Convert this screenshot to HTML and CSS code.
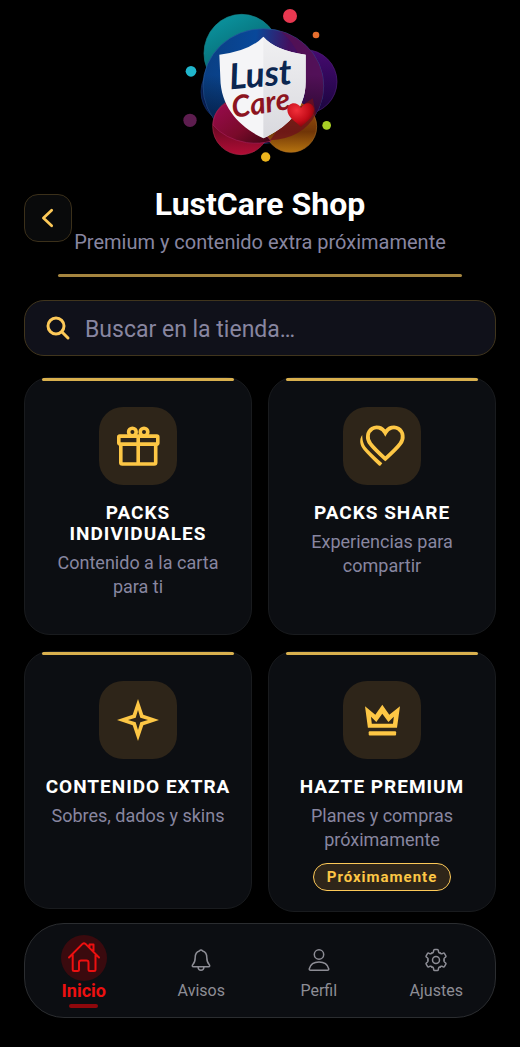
FILE: index.html
```html
<!DOCTYPE html>
<html lang="es">
<head>
    <meta charset="UTF-8">
    <meta name="viewport" content="width=device-width, initial-scale=1.0">
    <title>LustCare Shop</title>
    <link rel="stylesheet" href="styles.css">
</head>
<body>
    <div class="logo">
        <svg viewBox="0 0 540 525" role="img" aria-label="Lust Care">
            <defs>
                <linearGradient id="teal" x1="0" y1="0" x2="0.5" y2="1">
                    <stop offset="0" stop-color="#0b9ba6"/>
                    <stop offset="0.5" stop-color="#087680"/>
                    <stop offset="1" stop-color="#023038"/>
                </linearGradient>
                <linearGradient id="main" x1="0" y1="0.4" x2="1" y2="0.5">
                    <stop offset="0" stop-color="#0a3f83"/>
                    <stop offset="0.4" stop-color="#08489a"/>
                    <stop offset="0.68" stop-color="#43105f"/>
                    <stop offset="1" stop-color="#4c1070"/>
                </linearGradient>
                <linearGradient id="shade" x1="0" y1="0" x2="0" y2="1">
                    <stop offset="0.4" stop-color="#000" stop-opacity="0"/>
                    <stop offset="1" stop-color="#04021a" stop-opacity="0.8"/>
                </linearGradient>
                <linearGradient id="violet" x1="0" y1="0" x2="0" y2="1">
                    <stop offset="0" stop-color="#460a70"/>
                    <stop offset="1" stop-color="#19053d"/>
                </linearGradient>
                <linearGradient id="pink" x1="0" y1="0" x2="1" y2="1">
                    <stop offset="0" stop-color="#9c0b52"/>
                    <stop offset="0.6" stop-color="#7a0a2a"/>
                    <stop offset="1" stop-color="#3c0513"/>
                </linearGradient>
                <linearGradient id="crimson" x1="0" y1="0" x2="0" y2="1">
                    <stop offset="0.4" stop-color="#5c0720"/>
                    <stop offset="1" stop-color="#b10d35"/>
                </linearGradient>
                <linearGradient id="amber" x1="0" y1="0" x2="0" y2="1">
                    <stop offset="0" stop-color="#a8570c"/>
                    <stop offset="0.6" stop-color="#703507"/>
                    <stop offset="1" stop-color="#b5730f"/>
                </linearGradient>
                <linearGradient id="silver" x1="0" y1="0" x2="0" y2="1">
                    <stop offset="0" stop-color="#f0f0f2"/>
                    <stop offset="1" stop-color="#d9d9de"/>
                </linearGradient>
                <radialGradient id="heart" cx="0.35" cy="0.3" r="0.8">
                    <stop offset="0" stop-color="#f2303a"/>
                    <stop offset="0.6" stop-color="#c30c18"/>
                    <stop offset="1" stop-color="#720208"/>
                </radialGradient>
                <clipPath id="disc"><ellipse cx="280" cy="258" rx="181" ry="172"/></clipPath>
            </defs>
            <ellipse cx="215" cy="160" rx="113" ry="117" fill="url(#teal)" stroke="#17888e" stroke-width="2"/>
            <circle cx="405" cy="245" r="96" fill="url(#violet)" stroke="#51207c" stroke-width="2"/>
            <circle cx="190" cy="275" r="97" fill="#071b4d" stroke="#133674" stroke-width="2"/>
            <ellipse cx="280" cy="258" rx="181" ry="172" fill="url(#main)" stroke="#285b9d" stroke-width="2"/>
            <g clip-path="url(#disc)">
                <path d="M318 86Q395 130 405 250V430H470V86z" fill="#551052" opacity="0.75"/>
                <rect x="90" y="80" width="380" height="360" fill="url(#shade)"/>
            </g>
            <circle cx="213" cy="379" r="85" fill="url(#crimson)" stroke="#ac2749" stroke-width="2"/>
            <ellipse cx="362" cy="380" rx="78" ry="77" fill="url(#amber)" stroke="#a86a22" stroke-width="2"/>
            <path d="M129 375C132 325 170 303 202 301L303 423Q270 433 230 428Q165 417 129 375z" fill="url(#pink)" stroke="#a51e59" stroke-width="2"/>
            <path d="M300 421Q399 415 438 342L428 295L355 345z" fill="#6d101b" opacity="0.75"/>
            <path d="M280 110Q315 151 407 164V245C407 335 343 385 280 415C214 385 152 325 151 235L148 164Q238 154 280 110z" fill="#f5f5f7"/>
            <path d="M280 110Q315 151 407 164V245C407 335 343 385 280 415z" fill="url(#silver)"/>
            <text class="logo-lust" x="181" y="268" transform="rotate(-5 181 268)">Lust</text>
            <text class="logo-care" x="190" y="354" transform="rotate(-9 190 354)">Care</text>
            <path d="M393 381C378 365 352 352 352 330C352 307 382 302 393 324C404 301 432 307 432 329C432 352 408 365 393 381z" fill="url(#heart)"/>
            <circle cx="360" cy="48" r="21" fill="#e83850"/>
            <circle cx="438" cy="105" r="10" fill="#e66e2e"/>
            <circle cx="63" cy="214" r="16" fill="#20b6cc"/>
            <circle cx="60" cy="361" r="20" fill="#5d1d4f"/>
            <circle cx="470" cy="376" r="13" fill="#a8ce25"/>
            <circle cx="287" cy="471" r="14" fill="#edb51d"/>
        </svg>
    </div>

    <header class="header">
        <button type="button" class="btn-back" aria-label="Volver">
            <svg viewBox="0 0 24 24" class="line-icon"><path d="M16 3.500L7 12l9 8.500"/></svg>
        </button>
        <div class="header-text">
            <h1>LustCare Shop</h1>
            <p>Premium y contenido extra próximamente</p>
        </div>
    </header>
    <div class="divider"></div>

    <main>
        <form class="search">
            <label for="search-bar" aria-label="Buscar">
                <svg viewBox="0 0 24 24" class="line-icon"><circle cx="10" cy="10" r="8"/><path d="M16 16l6 6"/></svg>
            </label>
            <input type="search" id="search-bar" placeholder="Buscar en la tienda…">
        </form>

        <div class="cards">
            <a href="#" class="card">
                <span class="card-icon">
                    <svg viewBox="0 0 48 48" fill="none" stroke="currentColor" stroke-width="3.6" stroke-linejoin="round">
                        <rect x="4.800" y="14.100" width="39" height="8" rx="1"/>
                        <path d="M6.800 22.500V40.500a1.500 1.500 0 0 0 1.500 1.500H40.200a1.500 1.500 0 0 0 1.500-1.500V22.500M24.200 14V42"/>
                        <circle cx="18.400" cy="10" r="3.800"/>
                        <circle cx="30" cy="10" r="3.800"/>
                    </svg>
                </span>
                <h2>PACKS INDIVIDUALES</h2>
                <p>Contenido a la carta para ti</p>
            </a>

            <a href="#" class="card">
                <span class="card-icon">
                    <svg viewBox="0 0 48 48">
                        <path fill="none" stroke="currentColor" stroke-width="3.800" d="M27.300 10.800C24.200 5 18 4.300 14.200 6.600C9.300 9.700 8.400 16.600 12.300 21.600C15.200 25.500 22 32 27.300 36.800C32.600 32 39.400 25.500 42.300 21.600C46.200 16.600 45.300 9.700 40.400 6.600C36.600 4.300 30.400 5 27.300 10.800z"/>
                        <path fill="currentColor" d="M4.200 13C4.400 20 6 23.500 9.500 27.200C14 32 19 36.500 24.300 41.200L22.500 43.500Q21.700 44.200 20.600 43.200C15 38 9.500 32.500 5.700 28C1.700 23 1.100 17.500 4.200 13z"/>
                    </svg>
                </span>
                <h2>PACKS SHARE</h2>
                <p>Experiencias para compartir</p>
            </a>

            <a href="#" class="card">
                <span class="card-icon">
                    <svg viewBox="0 0 48 48" fill="currentColor" fill-rule="evenodd">
                        <path d="M24 3L29.300 18.700L45 24L29.300 29.300L24 45L18.700 29.300L3 24L18.700 18.700zM24 14L21.700 21.700L14 24L21.700 26.300L24 34L26.300 26.300L34 24L26.300 21.700z"/>
                    </svg>
                </span>
                <h2>CONTENIDO EXTRA</h2>
                <p>Sobres, dados y skins</p>
            </a>

            <a href="#" class="card">
                <span class="card-icon">
                    <svg viewBox="0 0 48 48" fill="currentColor" fill-rule="evenodd">
                        <path d="M7 10.300L17.300 18.700L24.300 8.700L31.300 18.700L42 10.300L39 31.700H9.900zM13 20.800L13.800 27.700H35L35.800 20.800L30.400 26L24.300 17.700L18.300 26z"/>
                        <rect x="10.700" y="35.300" width="27.400" height="4.200" rx="1"/>
                    </svg>
                </span>
                <h2>HAZTE PREMIUM</h2>
                <p>Planes y compras próximamente</p>
                <span class="badge">Próximamente</span>
            </a>
        </div>
    </main>

    <nav class="tab-bar">
        <a href="#" class="tab active">
            <span class="tab-icon">
                <svg viewBox="0 0 32 32" class="line-icon">
                    <path d="M1 15.500L14.500 1.900Q16 .6 17.500 1.900L31 15.500M4.700 13V27.500Q4.700 29 6.200 29H9.500Q11 29 11 27.500V20.500Q11 18.500 13 18.500H18.500Q20.500 18.500 20.500 20.500V27.500Q20.500 29 22 29H26Q27.500 29 27.500 27.500V13M21.500 5V2.500H25.500V9"/>
                </svg>
            </span>
            Inicio
        </a>
        <a href="#" class="tab">
            <span class="tab-icon">
                <svg viewBox="0 0 22 22" class="line-icon">
                    <path d="M9.300 2Q11 0 12.700 2C15.500 2.800 16.800 5 16.800 8.500C16.800 12.500 17.500 14 19.300 15.700Q20.400 17.700 18.500 17.800H3.500Q1.600 17.700 2.700 15.700C4.500 14 5.200 12.500 5.200 8.500C5.200 5 6.500 2.800 9.300 2zM8 18Q8.300 21.200 11 21.200Q13.700 21.200 14 18"/>
                </svg>
            </span>
            Avisos
        </a>
        <a href="#" class="tab">
            <span class="tab-icon">
                <svg viewBox="0 0 22 22" class="line-icon">
                    <circle cx="11" cy="5.500" r="4.700"/>
                    <path d="M2.500 21.200Q1 21.200 1.300 19.700C2.500 15 6.500 13 11 13C15.500 13 19.500 15 20.700 19.700Q21 21.200 19.500 21.200z"/>
                </svg>
            </span>
            Perfil
        </a>
        <a href="#" class="tab">
            <span class="tab-icon">
                <svg viewBox="1 1 22 22" class="line-icon">
                    <defs><path id="tooth" d="M7.900 4.900Q9.300 5 9.500 3.700L9.700 2.300Q9.800 1.400 10.700 1.400H13.300Q14.200 1.400 14.300 2.300L14.500 3.700Q14.700 5 16.100 4.900"/></defs>
                    <use href="#tooth"/>
                    <use href="#tooth" transform="rotate(60 12 12)"/>
                    <use href="#tooth" transform="rotate(120 12 12)"/>
                    <use href="#tooth" transform="rotate(180 12 12)"/>
                    <use href="#tooth" transform="rotate(240 12 12)"/>
                    <use href="#tooth" transform="rotate(300 12 12)"/>
                    <circle cx="12" cy="12" r="3.500"/>
                </svg>
            </span>
            Ajustes
        </a>
    </nav>
</body>
</html>
```
FILE: styles.css
```css
/* General Styling */
* {
    box-sizing: border-box;
}

body {
    font-family: Roboto, Arial, sans-serif;
    margin: 0;
    padding: 0 24px 28px;
    background-color: #000;
    color: #fff;
}

h1, h2, p {
    margin: 0;
}

a {
    text-decoration: none;
}

svg {
    display: block;
    overflow: visible;
}

.line-icon {
    fill: none;
    stroke: currentColor;
    stroke-linecap: round;
    stroke-linejoin: round;
}

/* Logo */
.logo svg {
    width: 180px;
    margin: 0 auto;
}

.logo-lust,
.logo-care {
    font-family: Lato, sans-serif;
    font-style: italic;
    font-weight: bold;
}

.logo-lust {
    font-size: 106px;
    fill: #0b2650;
}

.logo-care {
    font-size: 90px;
    fill: #8c1420;
}

/* Header */
.header {
    display: grid;
    grid-template-columns: 48px 1fr 48px;
    align-items: end;
    margin-top: 11px;
}

.btn-back {
    display: flex;
    align-items: center;
    justify-content: center;
    height: 48px;
    margin-bottom: 14px;
    padding: 0;
    border: 1px solid #3b301a;
    border-radius: 14px;
    background-color: #090a0b;
    color: #fdc958;
    cursor: pointer;
}

.btn-back svg {
    width: 22px;
    stroke-width: 3;
}

.header-text {
    text-align: center;
    white-space: nowrap;
}

.header h1 {
    font-size: 32px;
    line-height: 36px;
}

.header p {
    font-size: 20px;
    line-height: 28px;
    margin-top: 6px;
    color: #8886a0;
}

.divider {
    height: 3px;
    margin: 18px 34px 0;
    border-radius: 2px;
    background-color: #a5853f;
}

/* Search */
.search {
    display: flex;
    align-items: center;
    gap: 15px;
    height: 56px;
    margin-top: 23px;
    padding: 0 21px;
    border: 1px solid #40351d;
    border-radius: 20px;
    background-color: #10111a;
}

.search svg {
    width: 24px;
    color: #fdc958;
    stroke-width: 3;
}

.search input {
    flex: 1;
    min-width: 0;
    padding: 2px 0 0;
    border: none;
    outline: none;
    background: none;
    font-family: inherit;
    font-size: 23px;
    color: #fff;
}

.search input::placeholder {
    color: #8886a0;
}

/* Cards */
.cards {
    display: grid;
    grid-template-columns: 1fr 1fr;
    align-items: start;
    gap: 16px;
    margin-top: 21px;
}

.card {
    display: flex;
    flex-direction: column;
    align-items: center;
    min-height: 258px;
    padding: 0 17px 20px;
    border: 1px solid #191b1e;
    border-radius: 26px;
    background-color: #0c0e12;
    color: #fff;
    text-align: center;
}

.card::before {
    content: "";
    align-self: stretch;
    height: 3px;
    margin-bottom: 26px;
    border-radius: 2px;
    background-color: #d9b04e;
}

.card-icon {
    display: flex;
    align-items: center;
    justify-content: center;
    width: 78px;
    height: 78px;
    border-radius: 24px;
    background-color: #2e2519;
    color: #fdc745;
}

.card-icon svg {
    width: 48px;
}

.card h2 {
    margin-top: 17px;
    font-size: 19px;
    line-height: 21px;
    letter-spacing: 1px;
}

.card p {
    max-width: 180px;
    margin-top: 7px;
    font-size: 18px;
    line-height: 24px;
    color: #8886a0;
}

.badge {
    margin-top: 11px;
    padding: 0 13px;
    border: 1px solid #fdc958;
    border-radius: 14px;
    background-color: #2e2519;
    color: #fdc745;
    font-size: 15px;
    font-weight: bold;
    line-height: 26px;
    letter-spacing: 1px;
}

/* Bottom navigation */
.tab-bar {
    display: grid;
    grid-template-columns: repeat(4, 1fr);
    height: 95px;
    margin-top: 11px;
    padding-top: 11px;
    border: 1px solid #2b2d30;
    border-radius: 40px;
    background-color: #0c0e12;
}

.tab {
    display: flex;
    flex-direction: column;
    align-items: center;
    font-size: 16px;
    line-height: 20px;
    color: #8d8d95;
}

.tab-icon {
    display: flex;
    align-items: center;
    justify-content: center;
    width: 46px;
    height: 46px;
    padding-top: 4px;
    border-radius: 50%;
}

.tab-icon svg {
    width: 22px;
    stroke-width: 1.5;
}

.tab.active {
    font-size: 18px;
    font-weight: bold;
    color: #ed1010;
}

.tab.active .tab-icon {
    padding-top: 0;
    background-color: #3a0a0e;
}

.tab.active svg {
    width: 32px;
    stroke-width: 2;
}

.tab.active::after {
    content: "";
    width: 29px;
    height: 4px;
    margin-top: 3px;
    border-radius: 2px;
    background-color: #8f080c;
}
```
